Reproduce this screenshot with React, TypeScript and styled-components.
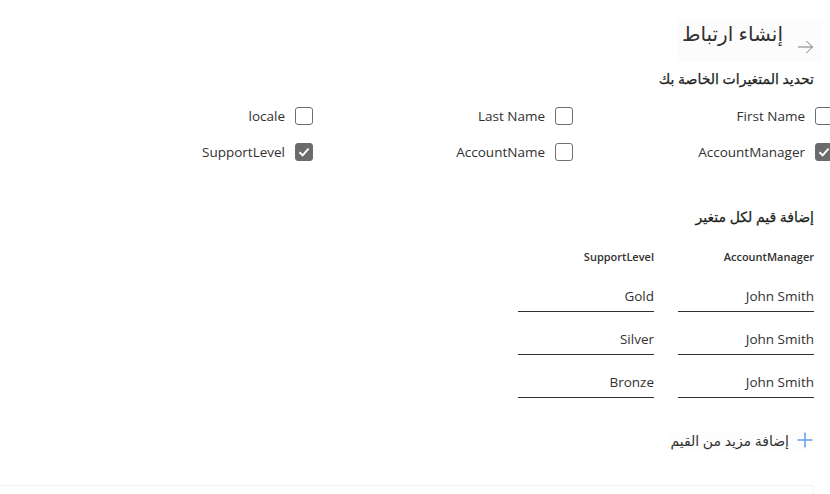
import React from "react";
import styled, { createGlobalStyle } from "styled-components";

const Global = createGlobalStyle`
  html, body { margin: 0; padding: 0; background: #ffffff; }
  body {
    font-family: "Open Sans", "DejaVu Sans", sans-serif;
    color: #323130;
    overflow: hidden;
  }
`;

const Page = styled.div`
  direction: rtl;
  width: 830px;
  height: 494px;
  box-sizing: border-box;
  padding-right: 16px;
  display: flex;
  flex-direction: column;
  overflow: hidden;
`;

const Header = styled.div`
  display: flex;
  align-items: flex-end;
  gap: 14px;
  margin-top: 20px;
  height: 48px;
  padding-bottom: 7px;
  box-sizing: border-box;
  align-self: flex-start;
  padding-left: 5px;
  margin-right: -8px;
  padding-right: 8px;
  background: #fcfcfc;
`;

const BackButton = styled.button`
  border: none;
  background: transparent;
  padding: 0;
  width: 17px;
  height: 16px;
  display: flex;
  align-items: center;
  justify-content: center;
  cursor: pointer;
`;

const Title = styled.h1`
  margin: 0;
  font-size: 20px;
  font-weight: 400;
  line-height: 28px;
  color: #323130;
  align-self: flex-start;
  margin-top: 0;
`;

const SectionTitle = styled.h2<{ $top: number }>`
  margin: ${(p) => p.$top}px 0 0 0;
  font-size: 14px;
  font-weight: 400;
  line-height: 20px;
  color: #201f1e;
  -webkit-text-stroke: 0.25px #201f1e;
`;

const CheckGrid = styled.div`
  display: grid;
  grid-template-columns: repeat(3, 260px);
  row-gap: 16px;
  margin-top: 17px;
  margin-right: -19px;
`;

const CheckItem = styled.label`
  display: flex;
  align-items: center;
  gap: 10px;
  height: 20px;
  font-size: 13.5px;
  color: #323130;
`;

const Box = styled.span<{ $checked: boolean }>`
  width: 18px;
  height: 18px;
  box-sizing: border-box;
  border-radius: 3px;
  border: 1px solid ${(p) => (p.$checked ? "#6b6b6b" : "#6e6e6e")};
  background: ${(p) => (p.$checked ? "#6b6b6b" : "#ffffff")};
  display: flex;
  align-items: center;
  justify-content: center;
  flex: none;
`;

const Table = styled.div`
  display: grid;
  grid-template-columns: 136px 136px;
  column-gap: 24px;
  row-gap: 13px;
  margin-top: 22px;
`;

const ColHead = styled.div`
  font-size: 11px;
  font-weight: 600;
  line-height: 16px;
  color: #323130;
  margin-bottom: 4px;
`;

const ValueInput = styled.input`
  direction: rtl;
  width: 100%;
  height: 30px;
  box-sizing: border-box;
  border: none;
  border-bottom: 1px solid #323130;
  padding: 0;
  font-family: "Open Sans", "DejaVu Sans", sans-serif;
  font-size: 13.5px;
  color: #323130;
  background: transparent;
  outline: none;
`;

const AddMore = styled.button`
  direction: rtl;
  margin-top: 33px;
  align-self: flex-start;
  display: flex;
  align-items: center;
  gap: 7px;
  border: none;
  background: #fdfdfd;
  padding: 0 0 0 2px;
  height: 20px;
  font-family: "Open Sans", "DejaVu Sans", sans-serif;
  font-size: 14px;
  color: #323130;
  cursor: pointer;
`;

const Footer = styled.div`
  margin-top: 35px;
  height: 10px;
  border-top: 1px solid #f1f1f1;
  border-right: 1px solid #f4f4f4;
  border-top-right-radius: 3px;
`;

const variables = [
  { name: "First Name", checked: false },
  { name: "Last Name", checked: false },
  { name: "locale", checked: false },
  { name: "AccountManager", checked: true },
  { name: "AccountName", checked: false },
  { name: "SupportLevel", checked: true },
];

const rows = [
  ["John Smith", "Gold"],
  ["John Smith", "Silver"],
  ["John Smith", "Bronze"],
];

const Check = () => (
  <svg width="14" height="14" viewBox="0 0 14 14">
    <path d="M2.5 7.3 L5.6 10.3 L11.6 3.6" fill="none" stroke="#fff" strokeWidth="2" />
  </svg>
);

export default function App() {
  return (
    <>
      <Global />
      <Page>
        <Header>
          <BackButton aria-label="back">
            <svg width="17" height="16" viewBox="0 0 17 16">
              <path d="M1 8 H15.5 M9.5 2 L15.5 8 L9.5 14" fill="none" stroke="#7a7a7a" strokeWidth="1" />
            </svg>
          </BackButton>
          <Title>إنشاء ارتباط</Title>
        </Header>
        <SectionTitle $top={7}>تحديد المتغيرات الخاصة بك</SectionTitle>
        <CheckGrid>
          {variables.map((v) => (
            <CheckItem key={v.name}>
              <Box $checked={v.checked}>{v.checked && <Check />}</Box>
              <span>{v.name}</span>
            </CheckItem>
          ))}
        </CheckGrid>
        <SectionTitle $top={45}>إضافة قيم لكل متغير</SectionTitle>
        <Table>
          <ColHead>AccountManager</ColHead>
          <ColHead>SupportLevel</ColHead>
          {rows.map((r, i) => (
            <React.Fragment key={i}>
              <ValueInput defaultValue={r[0]} />
              <ValueInput defaultValue={r[1]} />
            </React.Fragment>
          ))}
        </Table>
        <AddMore>
          <svg width="18" height="18" viewBox="0 0 18 18">
            <path d="M9 1.5 V16.5 M1.5 9 H16.5" stroke="#6a9ff0" strokeWidth="1.6" fill="none" />
          </svg>
          <span>إضافة مزيد من القيم</span>
        </AddMore>
        <Footer />
      </Page>
    </>
  );
}
